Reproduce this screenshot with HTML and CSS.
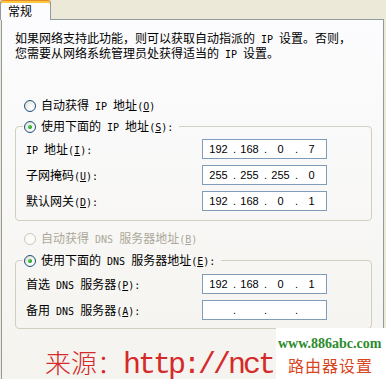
FILE: index.html
```html
<!DOCTYPE html>
<html lang="zh-CN">
<head>
<meta charset="utf-8">
<title>Internet 协议 (TCP/IP) 属性</title>
<link rel="stylesheet" href="styles.css">
</head>
<body>
<div class="window">
  <div class="tabs"><div class="tab">常规</div></div>
  <div class="panel">
    <p class="intro">如果网络支持此功能，则可以获取自动指派的<span class="en"> IP </span>设置。否则，<br>您需要从网络系统管理员处获得适当的<span class="en"> IP </span>设置。</p>

    <div class="option opt-auto-ip"><span class="radio"></span><span>自动获得<span class="en"> IP </span>地址<span class="en">(<u>O</u>)</span></span></div>

    <fieldset class="group group-ip">
      <legend class="legend"><span class="option"><span class="radio checked"></span><span>使用下面的<span class="en"> IP </span>地址<span class="en">(<u>S</u>):</span></span></span></legend>
      <div class="rows">
        <label class="lbl"><span class="en">IP </span>地址<span class="en">(<u>I</u>):</span></label>
        <div class="ipbox"><span class="f">192</span><span class="d">.</span><span class="f">168</span><span class="d">.</span><span class="f">0</span><span class="d">.</span><span class="f">7</span></div>
        <label class="lbl">子网掩码<span class="en">(<u>U</u>):</span></label>
        <div class="ipbox"><span class="f">255</span><span class="d">.</span><span class="f">255</span><span class="d">.</span><span class="f">255</span><span class="d">.</span><span class="f">0</span></div>
        <label class="lbl">默认网关<span class="en">(<u>D</u>):</span></label>
        <div class="ipbox"><span class="f">192</span><span class="d">.</span><span class="f">168</span><span class="d">.</span><span class="f">0</span><span class="d">.</span><span class="f">1</span></div>
      </div>
    </fieldset>

    <div class="option opt-auto-dns disabled"><span class="radio"></span><span>自动获得<span class="en"> DNS </span>服务器地址<span class="en">(<u>B</u>)</span></span></div>

    <fieldset class="group group-dns">
      <legend class="legend"><span class="option"><span class="radio checked"></span><span>使用下面的<span class="en"> DNS </span>服务器地址<span class="en">(<u>E</u>):</span></span></span></legend>
      <div class="rows">
        <label class="lbl">首选<span class="en"> DNS </span>服务器<span class="en">(<u>P</u>):</span></label>
        <div class="ipbox"><span class="f">192</span><span class="d">.</span><span class="f">168</span><span class="d">.</span><span class="f">0</span><span class="d">.</span><span class="f">1</span></div>
        <label class="lbl">备用<span class="en"> DNS </span>服务器<span class="en">(<u>A</u>):</span></label>
        <div class="ipbox"><span class="f"></span><span class="d">.</span><span class="f"></span><span class="d">.</span><span class="f"></span><span class="d">.</span><span class="f"></span></div>
      </div>
    </fieldset>
  </div>

  <div class="watermark"><span class="wm-cjk">来源：</span><span class="wm-lat">http://nct</span></div>
  <div class="stamp">
    <div class="stamp-url">www.886abc.com</div>
    <div class="stamp-title">路由器设置</div>
  </div>
</div>
</body>
</html>
```
FILE: styles.css
```css
html, body {
  margin: 0;
  padding: 0;
}
body {
  background: #ECE9D8;
  font-family: "Noto Sans CJK SC", "Noto Sans", sans-serif;
  font-size: 12px;
  color: #000;
  width: 386px;
  height: 379px;
  overflow: hidden;
}
.window {
  position: relative;
  width: 386px;
  height: 379px;
  overflow: hidden;
}
.en {
  font-family: "DejaVu Sans Mono", monospace;
  font-size: 10px;
  white-space: pre;
}
.tabs {
  height: 19px;
  display: flex;
}
.tab {
  position: relative;
  z-index: 1;
  box-sizing: border-box;
  width: 51px;
  height: 20px;
  background: #FCFCFE;
  border: 1px solid #919B9C;
  border-bottom: none;
  border-top: 1px solid #E68B2C;
  box-shadow: inset 0 2px 0 #FFC73C;
  border-radius: 3px 3px 0 0;
  padding: 2px 0 0 7px;
  line-height: 15px;
}
.panel {
  margin-left: 1px;
  width: 383px;
  height: 372px;
  box-sizing: border-box;
  border: 1px solid #919B9C;
  background: linear-gradient(#FCFCFE, #F4F3EE);
  padding: 0 11px 0 13px;
}
.intro {
  margin: 11px 0 0;
  line-height: 13px;
  white-space: nowrap;
}
.option {
  display: flex;
  align-items: center;
  height: 13px;
  line-height: 13px;
  gap: 5px;
  white-space: nowrap;
}
.radio {
  position: relative;
  flex: none;
  width: 12px;
  height: 12px;
  box-sizing: border-box;
  border: 1px solid #1C5180;
  border-radius: 50%;
  background: radial-gradient(circle at 65% 65%, #FFFFFF 0%, #F6F6F3 35%, #D8D5CA 100%);
}
.radio.checked::after {
  content: "";
  position: absolute;
  left: 3px;
  top: 3px;
  width: 4px;
  height: 4px;
  border-radius: 50%;
  background: radial-gradient(circle at 35% 35%, #55D455 0%, #21A121 60%, #1A8A1A 100%);
}
.disabled {
  color: #ACA899;
}
.disabled .radio {
  border-color: #CAC8BB;
  background: #FBFBF8;
}
.opt-auto-ip {
  margin: 38px 0 0 9px;
}
.opt-auto-dns {
  margin: 11px 0 0 9px;
}
.group {
  box-sizing: border-box;
  width: 357px;
  min-width: 0;
  margin: 0;
  border: 1px solid #D0D0BF;
  border-radius: 4px;
}
.group-ip {
  margin-top: 8px;
  padding: 6px 10px 9px;
}
.group-dns {
  margin-top: 9px;
  padding: 7px 10px 8px;
}
.legend {
  margin-left: -3px;
  padding: 0 6px 0 1px;
}
.rows {
  display: grid;
  grid-template-columns: 176px 125px;
  row-gap: 6px;
  align-items: center;
}
.lbl {
  line-height: 13px;
  white-space: nowrap;
}
.ipbox {
  display: flex;
  height: 20px;
  box-sizing: border-box;
  border: 1px solid #7F9DB9;
  background: #FFFFFF;
  padding-left: 2px;
  overflow: hidden;
  font-family: "Liberation Sans", Arial, sans-serif;
  font-size: 11px;
  line-height: 18px;
}
.ipbox .f {
  flex: none;
  width: 27px;
  text-align: center;
}
.ipbox .d {
  flex: none;
  width: 4px;
  text-align: right;
}
.watermark {
  position: absolute;
  left: 45px;
  top: 347px;
  line-height: 30px;
  color: #D42A2A;
  white-space: nowrap;
}
.wm-cjk {
  font-family: "Noto Sans CJK SC", sans-serif;
  font-weight: 300;
  font-size: 26px;
}
.wm-lat {
  font-family: "Liberation Mono", monospace;
  font-size: 30px;
  letter-spacing: -3px;
}
.stamp {
  position: absolute;
  left: 276px;
  top: 328px;
  width: 110px;
  height: 51px;
  background: #FFFFFF;
}
.stamp-url {
  margin: 8px 0 0 2px;
  font-family: "Liberation Serif", serif;
  font-weight: bold;
  font-size: 14px;
  line-height: 16px;
  color: #2E8B2E;
}
.stamp-title {
  margin: 4px 0 0 12px;
  font-family: "Noto Sans CJK SC", sans-serif;
  font-size: 16px;
  line-height: 18px;
  letter-spacing: 1px;
  color: #D9461E;
}
```
